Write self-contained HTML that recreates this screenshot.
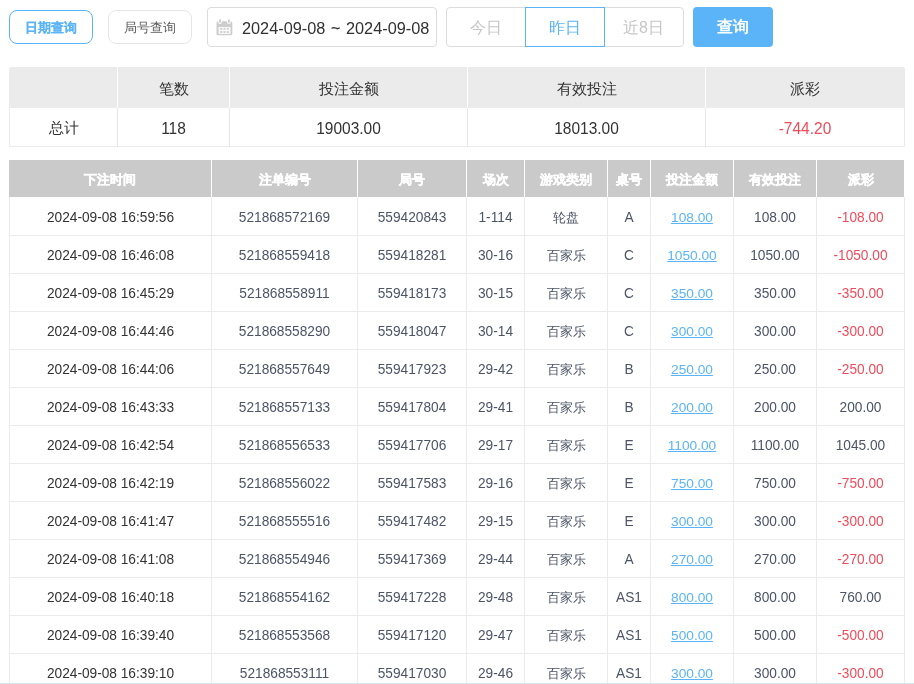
<!DOCTYPE html><html><head><meta charset="utf-8"><style>
*{margin:0;padding:0;box-sizing:border-box}
html,body{width:914px;height:684px;overflow:hidden;background:#fff}
body{font-family:"Liberation Sans",sans-serif;position:relative}
.a{position:absolute}
.c{position:absolute;display:flex;align-items:center;justify-content:center;white-space:nowrap}
.btn>span{position:relative}
.btn{position:absolute;display:flex;align-items:center;justify-content:center;font-size:14px;border-radius:8px}
.hd{background:#cacaca;color:#fff;font-weight:bold;font-size:14px;-webkit-text-stroke:0.35px #fff}
.vl{position:absolute;width:1px}
.hl{position:absolute;height:1px}
.t{font-size:14px}
.c>span{position:relative}
.c>span.n{display:inline-block;transform:scaleY(1.08)}
</style></head><body><div id="root" style="position:absolute;left:0;top:0;width:914px;height:684px;will-change:transform">
<div class="btn" style="left:9px;top:10px;width:84px;height:34px;border:1px solid #5ab4f7;color:#5ab4f7;font-weight:bold;font-size:13px;-webkit-text-stroke:0.1px #5ab4f7"><span style="top:0.5px">日期查询</span></div>
<div class="btn" style="left:108px;top:10px;width:84px;height:34px;border:1px solid #e6e6e6;color:#5c5c5c;font-size:13.4px"><span style="top:0.5px">局号查询</span></div>
<div class="a" style="left:207px;top:7px;width:230px;height:40px;border:1px solid #dcdcdc;border-radius:4px"></div>
<svg class="a" style="left:213px;top:16px" width="24" height="22" viewBox="0 0 24 22">
<rect x="3.5" y="5.3" width="15.8" height="14" rx="1.6" fill="#cdcdcd"/>
<rect x="5.6" y="11" width="11.9" height="6.9" fill="#fbfbfb"/>
<g fill="#cdcdcd"><rect x="7.2" y="11.9" width="2" height="1.8"/><rect x="10.5" y="11.9" width="2" height="1.8"/><rect x="13.8" y="11.9" width="2" height="1.8"/>
<rect x="7.2" y="15.1" width="2" height="1.8"/><rect x="10.5" y="15.1" width="2" height="1.8"/><rect x="13.8" y="15.1" width="2" height="1.8"/></g>
<rect x="5.2" y="3" width="3.6" height="5" rx="1.8" fill="#fff"/><rect x="14.1" y="3" width="3.6" height="5" rx="1.8" fill="#fff"/>
<rect x="6.1" y="3.2" width="1.8" height="3.8" rx="0.9" fill="#cdcdcd"/>
<rect x="15" y="3.2" width="1.8" height="3.8" rx="0.9" fill="#cdcdcd"/>
</svg>
<div class="a" id="d1" style="left:242px;top:8px;height:40px;line-height:40px;font-size:16.3px;color:#303133;white-space:nowrap">2024-09-08</div>
<div class="a" id="d2" style="left:331px;top:9px;height:40px;line-height:40px;font-size:16px;-webkit-text-stroke:0.2px #303133;color:#303133;white-space:nowrap">~</div>
<div class="a" id="d3" style="left:346px;top:8px;height:40px;line-height:40px;font-size:16.3px;color:#303133;white-space:nowrap">2024-09-08</div>
<div class="a" style="left:446px;top:7px;width:238px;height:40px;border:1px solid #dcdcdc;border-radius:4px"></div>
<div class="c" style="left:446px;top:7px;width:79px;height:40px;font-size:16px;color:#c6c6c6"><span style="top:1px">今日</span></div>
<div class="c" style="left:525px;top:7px;width:80px;height:40px;font-size:16px;color:#5ab4f7;border:1px solid #5ab4f7"><span style="top:1px">昨日</span></div>
<div class="c" style="left:604px;top:7px;width:79px;height:40px;font-size:16px;color:#c6c6c6"><span style="top:1px">近8日</span></div>
<div class="c" style="left:693px;top:7px;width:80px;height:40px;font-size:16px;color:#fff;font-weight:bold;background:#5ab4f7;border-radius:4px"><span style="top:0.5px">查询</span></div>
<div class="a" style="left:9px;top:67px;width:896px;height:80px;border:1px solid #ebebeb;border-radius:3px 3px 0 0"></div>
<div class="a" style="left:9px;top:67px;width:896px;height:41px;background:#ebebeb;border-radius:3px 3px 0 0"></div>
<div class="vl" style="left:117px;top:67px;height:80px;background:#e6e6e6"></div>
<div class="vl" style="left:117px;top:67px;height:41px;background:#fff"></div>
<div class="vl" style="left:229px;top:67px;height:80px;background:#e6e6e6"></div>
<div class="vl" style="left:229px;top:67px;height:41px;background:#fff"></div>
<div class="vl" style="left:467px;top:67px;height:80px;background:#e6e6e6"></div>
<div class="vl" style="left:467px;top:67px;height:41px;background:#fff"></div>
<div class="vl" style="left:705px;top:67px;height:80px;background:#e6e6e6"></div>
<div class="vl" style="left:705px;top:67px;height:41px;background:#fff"></div>
<div class="c t" style="left:9px;top:67px;width:109px;height:41px;font-size:15px;color:#333333"><span style="top:2px"></span></div>
<div class="c t" style="left:9px;top:108px;width:109px;height:38px;font-size:15px;color:#333333"><span style="top:1.5px">总计</span></div>
<div class="c t" style="left:117px;top:67px;width:113px;height:41px;font-size:15px;color:#333333"><span style="top:2px">笔数</span></div>
<div class="c t" style="left:117px;top:108px;width:113px;height:38px;font-size:15.5px;color:#333333"><span class="n" style="top:1.5px">118</span></div>
<div class="c t" style="left:229px;top:67px;width:239px;height:41px;font-size:15px;color:#333333"><span style="top:2px">投注金额</span></div>
<div class="c t" style="left:229px;top:108px;width:239px;height:38px;font-size:15.5px;color:#333333"><span class="n" style="top:1.5px">19003.00</span></div>
<div class="c t" style="left:467px;top:67px;width:239px;height:41px;font-size:15px;color:#333333"><span style="top:2px">有效投注</span></div>
<div class="c t" style="left:467px;top:108px;width:239px;height:38px;font-size:15.5px;color:#333333"><span class="n" style="top:1.5px">18013.00</span></div>
<div class="c t" style="left:705px;top:67px;width:200px;height:41px;font-size:15px;color:#333333"><span style="top:2px">派彩</span></div>
<div class="c t" style="left:705px;top:108px;width:200px;height:38px;font-size:15.5px;color:#f04b5b"><span class="n" style="top:1.5px">-744.20</span></div>
<div class="a hd" style="left:9px;top:160px;width:895px;height:37px"></div>
<div class="c hd" style="left:9px;top:160px;width:202px;height:37px;font-size:13px"><span style="top:1.5px">下注时间</span></div>
<div class="c hd" style="left:212px;top:160px;width:145px;height:37px;font-size:13px"><span style="top:1.5px">注单编号</span></div>
<div class="c hd" style="left:358px;top:160px;width:108px;height:37px;font-size:13px"><span style="top:1.5px">局号</span></div>
<div class="c hd" style="left:467px;top:160px;width:57px;height:37px;font-size:13px"><span style="top:1.5px">场次</span></div>
<div class="c hd" style="left:525px;top:160px;width:82px;height:37px;font-size:13px"><span style="top:1.5px">游戏类别</span></div>
<div class="c hd" style="left:608px;top:160px;width:42px;height:37px;font-size:13px"><span style="top:1.5px">桌号</span></div>
<div class="c hd" style="left:651px;top:160px;width:82px;height:37px;font-size:13px"><span style="top:1.5px">投注金额</span></div>
<div class="c hd" style="left:734px;top:160px;width:82px;height:37px;font-size:13px"><span style="top:1.5px">有效投注</span></div>
<div class="c hd" style="left:817px;top:160px;width:87px;height:37px;font-size:13px"><span style="top:1.5px">派彩</span></div>
<div class="vl" style="left:211px;top:160px;height:37px;background:#fff"></div>
<div class="vl" style="left:357px;top:160px;height:37px;background:#fff"></div>
<div class="vl" style="left:466px;top:160px;height:37px;background:#fff"></div>
<div class="vl" style="left:524px;top:160px;height:37px;background:#fff"></div>
<div class="vl" style="left:607px;top:160px;height:37px;background:#fff"></div>
<div class="vl" style="left:650px;top:160px;height:37px;background:#fff"></div>
<div class="vl" style="left:733px;top:160px;height:37px;background:#fff"></div>
<div class="vl" style="left:816px;top:160px;height:37px;background:#fff"></div>
<div class="vl" style="left:9px;top:197px;height:487px;background:#ebebeb"></div>
<div class="vl" style="left:211px;top:197px;height:487px;background:#ebebeb"></div>
<div class="vl" style="left:357px;top:197px;height:487px;background:#ebebeb"></div>
<div class="vl" style="left:466px;top:197px;height:487px;background:#ebebeb"></div>
<div class="vl" style="left:524px;top:197px;height:487px;background:#ebebeb"></div>
<div class="vl" style="left:607px;top:197px;height:487px;background:#ebebeb"></div>
<div class="vl" style="left:650px;top:197px;height:487px;background:#ebebeb"></div>
<div class="vl" style="left:733px;top:197px;height:487px;background:#ebebeb"></div>
<div class="vl" style="left:816px;top:197px;height:487px;background:#ebebeb"></div>
<div class="vl" style="left:904px;top:197px;height:487px;background:#ebebeb"></div>
<div class="c t" style="left:9px;top:197px;width:203px;height:38px;color:#333333;font-size:13.7px"><span class="n" style="top:1.5px">2024-09-08 16:59:56</span></div>
<div class="c t" style="left:211px;top:197px;width:147px;height:38px;color:#4b5566;font-size:13.7px"><span class="n" style="top:1.5px">521868572169</span></div>
<div class="c t" style="left:357px;top:197px;width:110px;height:38px;color:#4b5566;font-size:13.7px"><span class="n" style="top:1.5px">559420843</span></div>
<div class="c t" style="left:466px;top:197px;width:59px;height:38px;color:#4b5566;font-size:13.7px"><span class="n" style="top:1.5px">1-114</span></div>
<div class="c t" style="left:524px;top:197px;width:84px;height:38px;color:#4b5566;font-size:13px"><span style="top:2px">轮盘</span></div>
<div class="c t" style="left:607px;top:197px;width:44px;height:38px;color:#4b5566;font-size:13.7px"><span class="n" style="top:1.5px">A</span></div>
<div class="c t" style="left:650px;top:197px;width:84px;height:38px;color:#4b5566;font-size:13.7px"><span style="top:1px"><span style="color:#5ab4f7;text-decoration:underline">108.00</span></span></div>
<div class="c t" style="left:733px;top:197px;width:84px;height:38px;color:#4b5566;font-size:13.7px"><span class="n" style="top:1.5px">108.00</span></div>
<div class="c t" style="left:816px;top:197px;width:89px;height:38px;color:#f04b5b;font-size:13.7px"><span class="n" style="top:1.5px">-108.00</span></div>
<div class="hl" style="left:9px;top:235px;width:896px;background:#ebebeb"></div>
<div class="c t" style="left:9px;top:235px;width:203px;height:38px;color:#333333;font-size:13.7px"><span class="n" style="top:1.5px">2024-09-08 16:46:08</span></div>
<div class="c t" style="left:211px;top:235px;width:147px;height:38px;color:#4b5566;font-size:13.7px"><span class="n" style="top:1.5px">521868559418</span></div>
<div class="c t" style="left:357px;top:235px;width:110px;height:38px;color:#4b5566;font-size:13.7px"><span class="n" style="top:1.5px">559418281</span></div>
<div class="c t" style="left:466px;top:235px;width:59px;height:38px;color:#4b5566;font-size:13.7px"><span class="n" style="top:1.5px">30-16</span></div>
<div class="c t" style="left:524px;top:235px;width:84px;height:38px;color:#4b5566;font-size:13px"><span style="top:2px">百家乐</span></div>
<div class="c t" style="left:607px;top:235px;width:44px;height:38px;color:#4b5566;font-size:13.7px"><span class="n" style="top:1.5px">C</span></div>
<div class="c t" style="left:650px;top:235px;width:84px;height:38px;color:#4b5566;font-size:13.7px"><span style="top:1px"><span style="color:#5ab4f7;text-decoration:underline">1050.00</span></span></div>
<div class="c t" style="left:733px;top:235px;width:84px;height:38px;color:#4b5566;font-size:13.7px"><span class="n" style="top:1.5px">1050.00</span></div>
<div class="c t" style="left:816px;top:235px;width:89px;height:38px;color:#f04b5b;font-size:13.7px"><span class="n" style="top:1.5px">-1050.00</span></div>
<div class="hl" style="left:9px;top:273px;width:896px;background:#ebebeb"></div>
<div class="c t" style="left:9px;top:273px;width:203px;height:38px;color:#333333;font-size:13.7px"><span class="n" style="top:1.5px">2024-09-08 16:45:29</span></div>
<div class="c t" style="left:211px;top:273px;width:147px;height:38px;color:#4b5566;font-size:13.7px"><span class="n" style="top:1.5px">521868558911</span></div>
<div class="c t" style="left:357px;top:273px;width:110px;height:38px;color:#4b5566;font-size:13.7px"><span class="n" style="top:1.5px">559418173</span></div>
<div class="c t" style="left:466px;top:273px;width:59px;height:38px;color:#4b5566;font-size:13.7px"><span class="n" style="top:1.5px">30-15</span></div>
<div class="c t" style="left:524px;top:273px;width:84px;height:38px;color:#4b5566;font-size:13px"><span style="top:2px">百家乐</span></div>
<div class="c t" style="left:607px;top:273px;width:44px;height:38px;color:#4b5566;font-size:13.7px"><span class="n" style="top:1.5px">C</span></div>
<div class="c t" style="left:650px;top:273px;width:84px;height:38px;color:#4b5566;font-size:13.7px"><span style="top:1px"><span style="color:#5ab4f7;text-decoration:underline">350.00</span></span></div>
<div class="c t" style="left:733px;top:273px;width:84px;height:38px;color:#4b5566;font-size:13.7px"><span class="n" style="top:1.5px">350.00</span></div>
<div class="c t" style="left:816px;top:273px;width:89px;height:38px;color:#f04b5b;font-size:13.7px"><span class="n" style="top:1.5px">-350.00</span></div>
<div class="hl" style="left:9px;top:311px;width:896px;background:#ebebeb"></div>
<div class="c t" style="left:9px;top:311px;width:203px;height:38px;color:#333333;font-size:13.7px"><span class="n" style="top:1.5px">2024-09-08 16:44:46</span></div>
<div class="c t" style="left:211px;top:311px;width:147px;height:38px;color:#4b5566;font-size:13.7px"><span class="n" style="top:1.5px">521868558290</span></div>
<div class="c t" style="left:357px;top:311px;width:110px;height:38px;color:#4b5566;font-size:13.7px"><span class="n" style="top:1.5px">559418047</span></div>
<div class="c t" style="left:466px;top:311px;width:59px;height:38px;color:#4b5566;font-size:13.7px"><span class="n" style="top:1.5px">30-14</span></div>
<div class="c t" style="left:524px;top:311px;width:84px;height:38px;color:#4b5566;font-size:13px"><span style="top:2px">百家乐</span></div>
<div class="c t" style="left:607px;top:311px;width:44px;height:38px;color:#4b5566;font-size:13.7px"><span class="n" style="top:1.5px">C</span></div>
<div class="c t" style="left:650px;top:311px;width:84px;height:38px;color:#4b5566;font-size:13.7px"><span style="top:1px"><span style="color:#5ab4f7;text-decoration:underline">300.00</span></span></div>
<div class="c t" style="left:733px;top:311px;width:84px;height:38px;color:#4b5566;font-size:13.7px"><span class="n" style="top:1.5px">300.00</span></div>
<div class="c t" style="left:816px;top:311px;width:89px;height:38px;color:#f04b5b;font-size:13.7px"><span class="n" style="top:1.5px">-300.00</span></div>
<div class="hl" style="left:9px;top:349px;width:896px;background:#ebebeb"></div>
<div class="c t" style="left:9px;top:349px;width:203px;height:38px;color:#333333;font-size:13.7px"><span class="n" style="top:1.5px">2024-09-08 16:44:06</span></div>
<div class="c t" style="left:211px;top:349px;width:147px;height:38px;color:#4b5566;font-size:13.7px"><span class="n" style="top:1.5px">521868557649</span></div>
<div class="c t" style="left:357px;top:349px;width:110px;height:38px;color:#4b5566;font-size:13.7px"><span class="n" style="top:1.5px">559417923</span></div>
<div class="c t" style="left:466px;top:349px;width:59px;height:38px;color:#4b5566;font-size:13.7px"><span class="n" style="top:1.5px">29-42</span></div>
<div class="c t" style="left:524px;top:349px;width:84px;height:38px;color:#4b5566;font-size:13px"><span style="top:2px">百家乐</span></div>
<div class="c t" style="left:607px;top:349px;width:44px;height:38px;color:#4b5566;font-size:13.7px"><span class="n" style="top:1.5px">B</span></div>
<div class="c t" style="left:650px;top:349px;width:84px;height:38px;color:#4b5566;font-size:13.7px"><span style="top:1px"><span style="color:#5ab4f7;text-decoration:underline">250.00</span></span></div>
<div class="c t" style="left:733px;top:349px;width:84px;height:38px;color:#4b5566;font-size:13.7px"><span class="n" style="top:1.5px">250.00</span></div>
<div class="c t" style="left:816px;top:349px;width:89px;height:38px;color:#f04b5b;font-size:13.7px"><span class="n" style="top:1.5px">-250.00</span></div>
<div class="hl" style="left:9px;top:387px;width:896px;background:#ebebeb"></div>
<div class="c t" style="left:9px;top:387px;width:203px;height:38px;color:#333333;font-size:13.7px"><span class="n" style="top:1.5px">2024-09-08 16:43:33</span></div>
<div class="c t" style="left:211px;top:387px;width:147px;height:38px;color:#4b5566;font-size:13.7px"><span class="n" style="top:1.5px">521868557133</span></div>
<div class="c t" style="left:357px;top:387px;width:110px;height:38px;color:#4b5566;font-size:13.7px"><span class="n" style="top:1.5px">559417804</span></div>
<div class="c t" style="left:466px;top:387px;width:59px;height:38px;color:#4b5566;font-size:13.7px"><span class="n" style="top:1.5px">29-41</span></div>
<div class="c t" style="left:524px;top:387px;width:84px;height:38px;color:#4b5566;font-size:13px"><span style="top:2px">百家乐</span></div>
<div class="c t" style="left:607px;top:387px;width:44px;height:38px;color:#4b5566;font-size:13.7px"><span class="n" style="top:1.5px">B</span></div>
<div class="c t" style="left:650px;top:387px;width:84px;height:38px;color:#4b5566;font-size:13.7px"><span style="top:1px"><span style="color:#5ab4f7;text-decoration:underline">200.00</span></span></div>
<div class="c t" style="left:733px;top:387px;width:84px;height:38px;color:#4b5566;font-size:13.7px"><span class="n" style="top:1.5px">200.00</span></div>
<div class="c t" style="left:816px;top:387px;width:89px;height:38px;color:#4b5566;font-size:13.7px"><span class="n" style="top:1.5px">200.00</span></div>
<div class="hl" style="left:9px;top:425px;width:896px;background:#ebebeb"></div>
<div class="c t" style="left:9px;top:425px;width:203px;height:38px;color:#333333;font-size:13.7px"><span class="n" style="top:1.5px">2024-09-08 16:42:54</span></div>
<div class="c t" style="left:211px;top:425px;width:147px;height:38px;color:#4b5566;font-size:13.7px"><span class="n" style="top:1.5px">521868556533</span></div>
<div class="c t" style="left:357px;top:425px;width:110px;height:38px;color:#4b5566;font-size:13.7px"><span class="n" style="top:1.5px">559417706</span></div>
<div class="c t" style="left:466px;top:425px;width:59px;height:38px;color:#4b5566;font-size:13.7px"><span class="n" style="top:1.5px">29-17</span></div>
<div class="c t" style="left:524px;top:425px;width:84px;height:38px;color:#4b5566;font-size:13px"><span style="top:2px">百家乐</span></div>
<div class="c t" style="left:607px;top:425px;width:44px;height:38px;color:#4b5566;font-size:13.7px"><span class="n" style="top:1.5px">E</span></div>
<div class="c t" style="left:650px;top:425px;width:84px;height:38px;color:#4b5566;font-size:13.7px"><span style="top:1px"><span style="color:#5ab4f7;text-decoration:underline">1100.00</span></span></div>
<div class="c t" style="left:733px;top:425px;width:84px;height:38px;color:#4b5566;font-size:13.7px"><span class="n" style="top:1.5px">1100.00</span></div>
<div class="c t" style="left:816px;top:425px;width:89px;height:38px;color:#4b5566;font-size:13.7px"><span class="n" style="top:1.5px">1045.00</span></div>
<div class="hl" style="left:9px;top:463px;width:896px;background:#ebebeb"></div>
<div class="c t" style="left:9px;top:463px;width:203px;height:38px;color:#333333;font-size:13.7px"><span class="n" style="top:1.5px">2024-09-08 16:42:19</span></div>
<div class="c t" style="left:211px;top:463px;width:147px;height:38px;color:#4b5566;font-size:13.7px"><span class="n" style="top:1.5px">521868556022</span></div>
<div class="c t" style="left:357px;top:463px;width:110px;height:38px;color:#4b5566;font-size:13.7px"><span class="n" style="top:1.5px">559417583</span></div>
<div class="c t" style="left:466px;top:463px;width:59px;height:38px;color:#4b5566;font-size:13.7px"><span class="n" style="top:1.5px">29-16</span></div>
<div class="c t" style="left:524px;top:463px;width:84px;height:38px;color:#4b5566;font-size:13px"><span style="top:2px">百家乐</span></div>
<div class="c t" style="left:607px;top:463px;width:44px;height:38px;color:#4b5566;font-size:13.7px"><span class="n" style="top:1.5px">E</span></div>
<div class="c t" style="left:650px;top:463px;width:84px;height:38px;color:#4b5566;font-size:13.7px"><span style="top:1px"><span style="color:#5ab4f7;text-decoration:underline">750.00</span></span></div>
<div class="c t" style="left:733px;top:463px;width:84px;height:38px;color:#4b5566;font-size:13.7px"><span class="n" style="top:1.5px">750.00</span></div>
<div class="c t" style="left:816px;top:463px;width:89px;height:38px;color:#f04b5b;font-size:13.7px"><span class="n" style="top:1.5px">-750.00</span></div>
<div class="hl" style="left:9px;top:501px;width:896px;background:#ebebeb"></div>
<div class="c t" style="left:9px;top:501px;width:203px;height:38px;color:#333333;font-size:13.7px"><span class="n" style="top:1.5px">2024-09-08 16:41:47</span></div>
<div class="c t" style="left:211px;top:501px;width:147px;height:38px;color:#4b5566;font-size:13.7px"><span class="n" style="top:1.5px">521868555516</span></div>
<div class="c t" style="left:357px;top:501px;width:110px;height:38px;color:#4b5566;font-size:13.7px"><span class="n" style="top:1.5px">559417482</span></div>
<div class="c t" style="left:466px;top:501px;width:59px;height:38px;color:#4b5566;font-size:13.7px"><span class="n" style="top:1.5px">29-15</span></div>
<div class="c t" style="left:524px;top:501px;width:84px;height:38px;color:#4b5566;font-size:13px"><span style="top:2px">百家乐</span></div>
<div class="c t" style="left:607px;top:501px;width:44px;height:38px;color:#4b5566;font-size:13.7px"><span class="n" style="top:1.5px">E</span></div>
<div class="c t" style="left:650px;top:501px;width:84px;height:38px;color:#4b5566;font-size:13.7px"><span style="top:1px"><span style="color:#5ab4f7;text-decoration:underline">300.00</span></span></div>
<div class="c t" style="left:733px;top:501px;width:84px;height:38px;color:#4b5566;font-size:13.7px"><span class="n" style="top:1.5px">300.00</span></div>
<div class="c t" style="left:816px;top:501px;width:89px;height:38px;color:#f04b5b;font-size:13.7px"><span class="n" style="top:1.5px">-300.00</span></div>
<div class="hl" style="left:9px;top:539px;width:896px;background:#ebebeb"></div>
<div class="c t" style="left:9px;top:539px;width:203px;height:38px;color:#333333;font-size:13.7px"><span class="n" style="top:1.5px">2024-09-08 16:41:08</span></div>
<div class="c t" style="left:211px;top:539px;width:147px;height:38px;color:#4b5566;font-size:13.7px"><span class="n" style="top:1.5px">521868554946</span></div>
<div class="c t" style="left:357px;top:539px;width:110px;height:38px;color:#4b5566;font-size:13.7px"><span class="n" style="top:1.5px">559417369</span></div>
<div class="c t" style="left:466px;top:539px;width:59px;height:38px;color:#4b5566;font-size:13.7px"><span class="n" style="top:1.5px">29-44</span></div>
<div class="c t" style="left:524px;top:539px;width:84px;height:38px;color:#4b5566;font-size:13px"><span style="top:2px">百家乐</span></div>
<div class="c t" style="left:607px;top:539px;width:44px;height:38px;color:#4b5566;font-size:13.7px"><span class="n" style="top:1.5px">A</span></div>
<div class="c t" style="left:650px;top:539px;width:84px;height:38px;color:#4b5566;font-size:13.7px"><span style="top:1px"><span style="color:#5ab4f7;text-decoration:underline">270.00</span></span></div>
<div class="c t" style="left:733px;top:539px;width:84px;height:38px;color:#4b5566;font-size:13.7px"><span class="n" style="top:1.5px">270.00</span></div>
<div class="c t" style="left:816px;top:539px;width:89px;height:38px;color:#f04b5b;font-size:13.7px"><span class="n" style="top:1.5px">-270.00</span></div>
<div class="hl" style="left:9px;top:577px;width:896px;background:#ebebeb"></div>
<div class="c t" style="left:9px;top:577px;width:203px;height:38px;color:#333333;font-size:13.7px"><span class="n" style="top:1.5px">2024-09-08 16:40:18</span></div>
<div class="c t" style="left:211px;top:577px;width:147px;height:38px;color:#4b5566;font-size:13.7px"><span class="n" style="top:1.5px">521868554162</span></div>
<div class="c t" style="left:357px;top:577px;width:110px;height:38px;color:#4b5566;font-size:13.7px"><span class="n" style="top:1.5px">559417228</span></div>
<div class="c t" style="left:466px;top:577px;width:59px;height:38px;color:#4b5566;font-size:13.7px"><span class="n" style="top:1.5px">29-48</span></div>
<div class="c t" style="left:524px;top:577px;width:84px;height:38px;color:#4b5566;font-size:13px"><span style="top:2px">百家乐</span></div>
<div class="c t" style="left:607px;top:577px;width:44px;height:38px;color:#4b5566;font-size:13.7px"><span class="n" style="top:1.5px">AS1</span></div>
<div class="c t" style="left:650px;top:577px;width:84px;height:38px;color:#4b5566;font-size:13.7px"><span style="top:1px"><span style="color:#5ab4f7;text-decoration:underline">800.00</span></span></div>
<div class="c t" style="left:733px;top:577px;width:84px;height:38px;color:#4b5566;font-size:13.7px"><span class="n" style="top:1.5px">800.00</span></div>
<div class="c t" style="left:816px;top:577px;width:89px;height:38px;color:#4b5566;font-size:13.7px"><span class="n" style="top:1.5px">760.00</span></div>
<div class="hl" style="left:9px;top:615px;width:896px;background:#ebebeb"></div>
<div class="c t" style="left:9px;top:615px;width:203px;height:38px;color:#333333;font-size:13.7px"><span class="n" style="top:1.5px">2024-09-08 16:39:40</span></div>
<div class="c t" style="left:211px;top:615px;width:147px;height:38px;color:#4b5566;font-size:13.7px"><span class="n" style="top:1.5px">521868553568</span></div>
<div class="c t" style="left:357px;top:615px;width:110px;height:38px;color:#4b5566;font-size:13.7px"><span class="n" style="top:1.5px">559417120</span></div>
<div class="c t" style="left:466px;top:615px;width:59px;height:38px;color:#4b5566;font-size:13.7px"><span class="n" style="top:1.5px">29-47</span></div>
<div class="c t" style="left:524px;top:615px;width:84px;height:38px;color:#4b5566;font-size:13px"><span style="top:2px">百家乐</span></div>
<div class="c t" style="left:607px;top:615px;width:44px;height:38px;color:#4b5566;font-size:13.7px"><span class="n" style="top:1.5px">AS1</span></div>
<div class="c t" style="left:650px;top:615px;width:84px;height:38px;color:#4b5566;font-size:13.7px"><span style="top:1px"><span style="color:#5ab4f7;text-decoration:underline">500.00</span></span></div>
<div class="c t" style="left:733px;top:615px;width:84px;height:38px;color:#4b5566;font-size:13.7px"><span class="n" style="top:1.5px">500.00</span></div>
<div class="c t" style="left:816px;top:615px;width:89px;height:38px;color:#f04b5b;font-size:13.7px"><span class="n" style="top:1.5px">-500.00</span></div>
<div class="hl" style="left:9px;top:653px;width:896px;background:#ebebeb"></div>
<div class="c t" style="left:9px;top:653px;width:203px;height:38px;color:#333333;font-size:13.7px"><span class="n" style="top:1.5px">2024-09-08 16:39:10</span></div>
<div class="c t" style="left:211px;top:653px;width:147px;height:38px;color:#4b5566;font-size:13.7px"><span class="n" style="top:1.5px">521868553111</span></div>
<div class="c t" style="left:357px;top:653px;width:110px;height:38px;color:#4b5566;font-size:13.7px"><span class="n" style="top:1.5px">559417030</span></div>
<div class="c t" style="left:466px;top:653px;width:59px;height:38px;color:#4b5566;font-size:13.7px"><span class="n" style="top:1.5px">29-46</span></div>
<div class="c t" style="left:524px;top:653px;width:84px;height:38px;color:#4b5566;font-size:13px"><span style="top:2px">百家乐</span></div>
<div class="c t" style="left:607px;top:653px;width:44px;height:38px;color:#4b5566;font-size:13.7px"><span class="n" style="top:1.5px">AS1</span></div>
<div class="c t" style="left:650px;top:653px;width:84px;height:38px;color:#4b5566;font-size:13.7px"><span style="top:1px"><span style="color:#5ab4f7;text-decoration:underline">300.00</span></span></div>
<div class="c t" style="left:733px;top:653px;width:84px;height:38px;color:#4b5566;font-size:13.7px"><span class="n" style="top:1.5px">300.00</span></div>
<div class="c t" style="left:816px;top:653px;width:89px;height:38px;color:#f04b5b;font-size:13.7px"><span class="n" style="top:1.5px">-300.00</span></div>
<div class="hl" style="left:0;top:683px;width:914px;background:#d3e8f1"></div>
</div></body></html>
